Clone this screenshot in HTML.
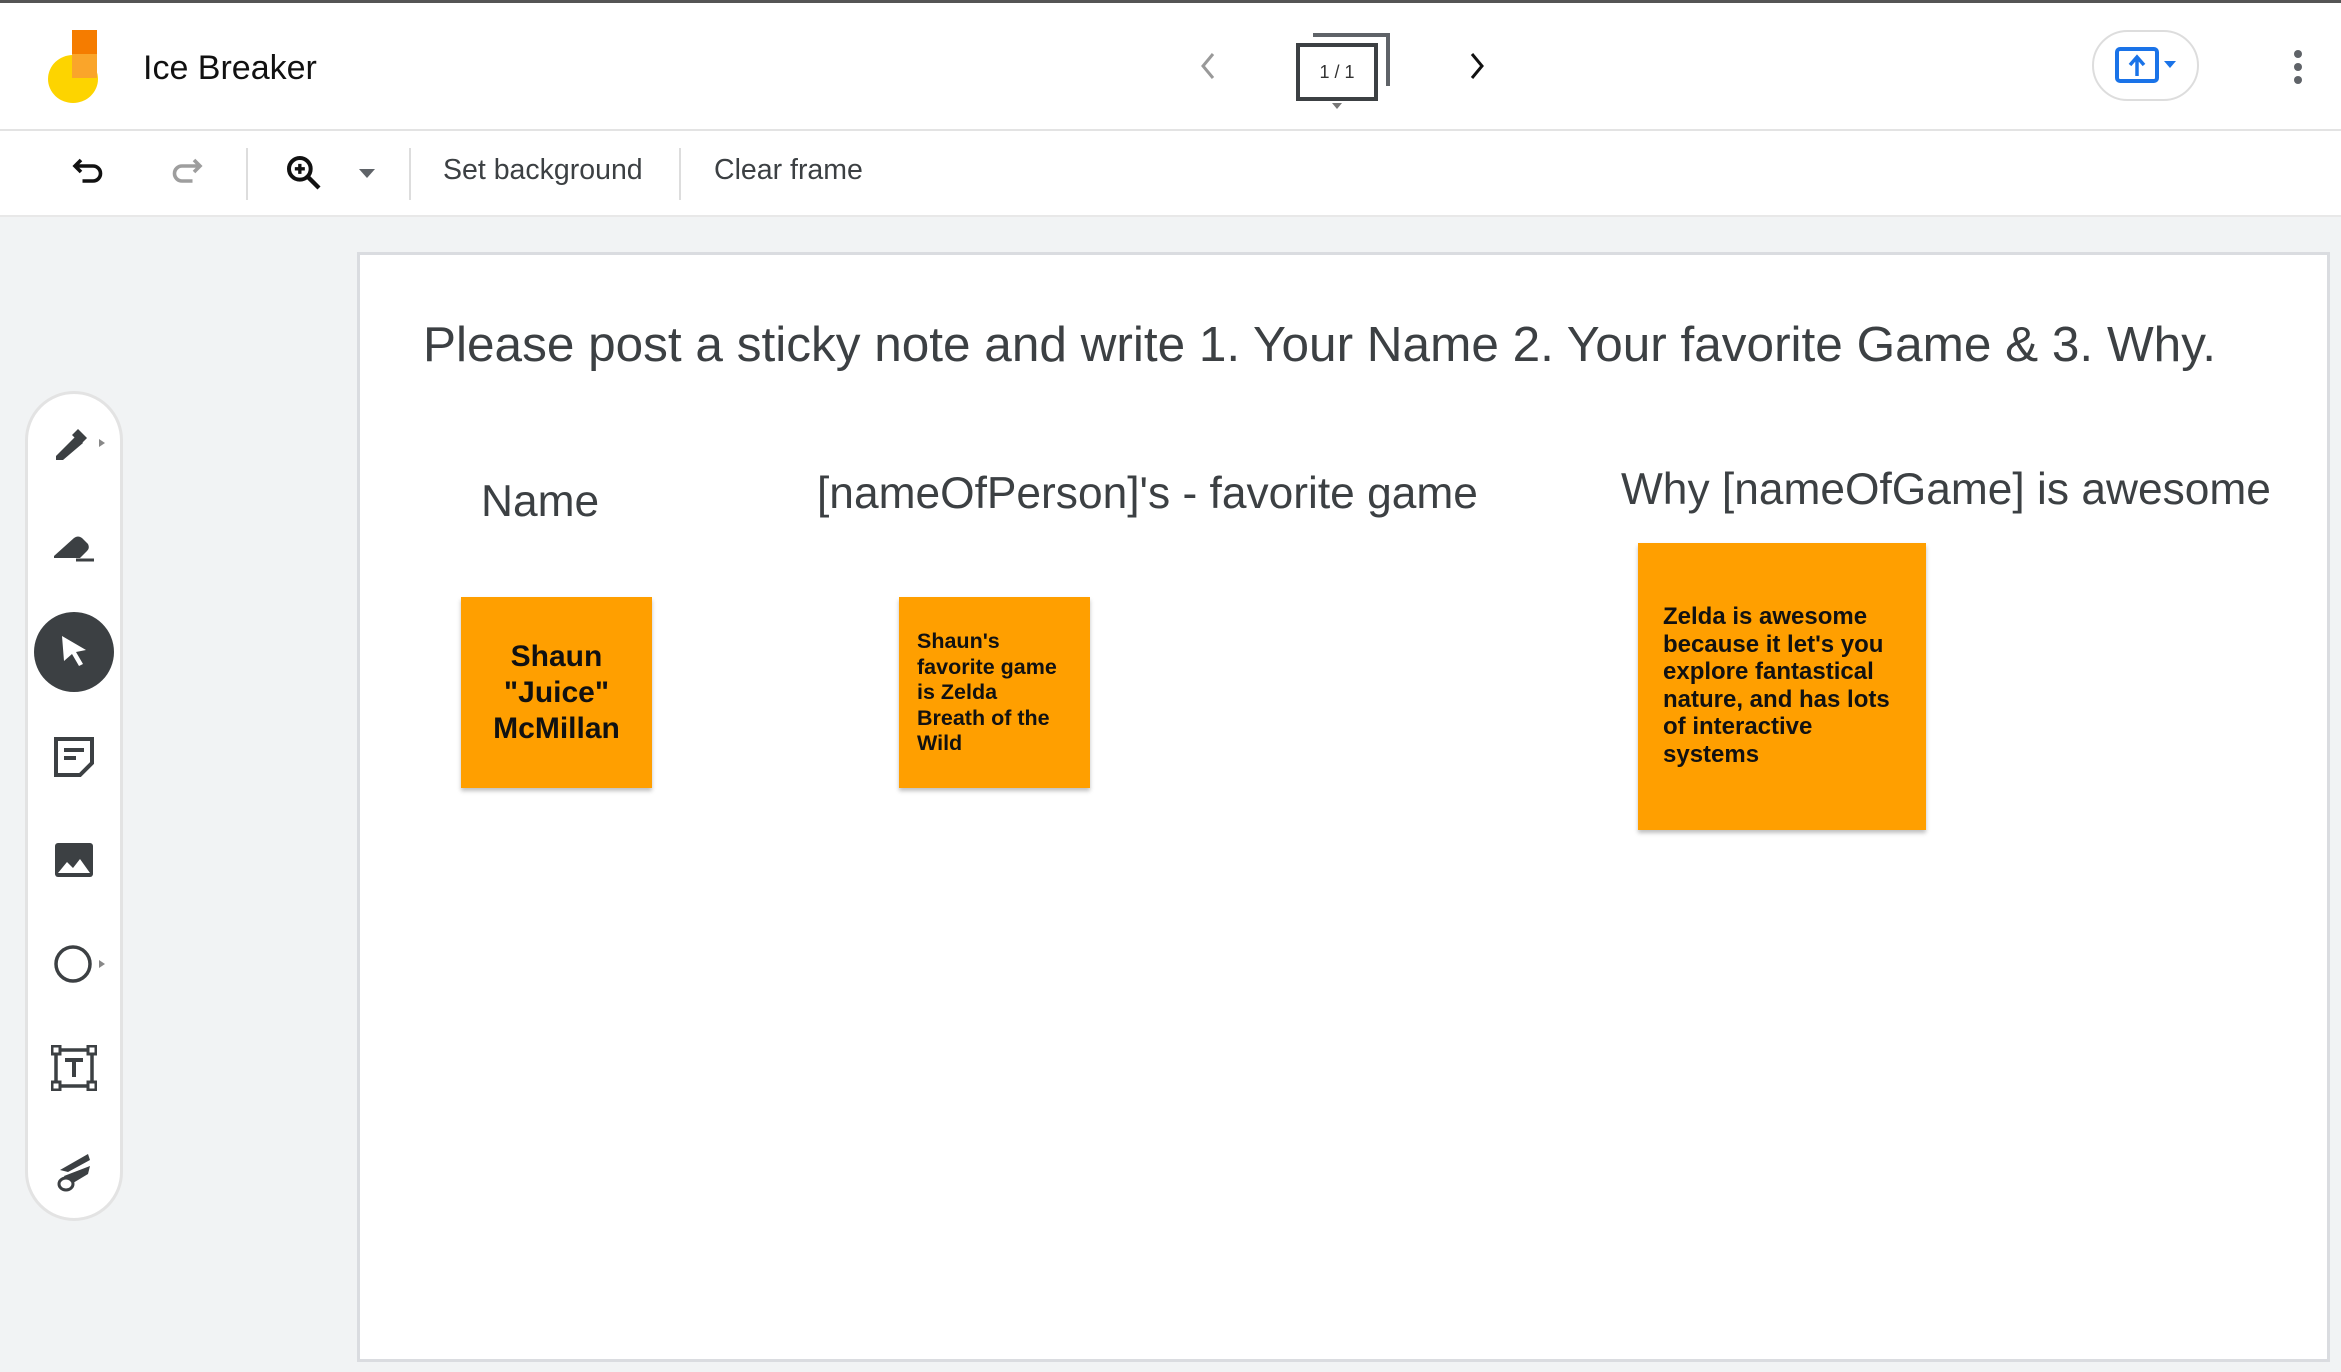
<!DOCTYPE html>
<html><head><meta charset="utf-8"><style>
*{margin:0;padding:0;box-sizing:border-box}
body{width:2341px;height:1372px;overflow:hidden;background:#f1f3f4;font-family:"Liberation Sans",Arial,sans-serif;position:relative;color:#202124}
.abs{position:absolute}
#hdr{left:0;top:0;width:2341px;height:131px;background:#fff;border-top:3px solid #555;border-bottom:2px solid #e3e3e3}
#tb{left:0;top:131px;width:2341px;height:86px;background:#fff;border-bottom:2px solid #e8e8e8}
.div{width:2px;height:52px;background:#ddd;top:148px}
.tbt{top:154px;font-size:28.5px;color:#3c4043}
#frame{left:357px;top:252px;width:1973px;height:1110px;background:#fff;border:3px solid #dadce0}
.h{font-size:44.3px;color:#3c4043;white-space:nowrap}
.st{background:#ff9f00;box-shadow:0 3px 4px rgba(0,0,0,.25);font-weight:bold;color:#111}
#side{left:25px;top:391px;width:98px;height:830px;background:#fff;border:3px solid #e3e3e3;border-radius:49px}
</style></head><body>
<div id="hdr" class="abs"></div>
<div class="abs" style="left:48px;top:55px;width:50px;height:48px;background:#fdd400;border-radius:50%"></div>
<div class="abs" style="left:72px;top:30px;width:25px;height:48px;background:#f57c00"></div>
<div class="abs" style="left:72px;top:54px;width:25px;height:24px;background:#faa52a"></div>
<div class="abs" style="left:143px;top:49px;font-size:34px;color:#111">Ice Breaker</div>
<svg class="abs" style="left:1195px;top:50px" width="28" height="32" viewBox="0 0 28 32"><path d="M18 4 L8 16 L18 28" fill="none" stroke="#999" stroke-width="3"/></svg>
<svg class="abs" style="left:1295px;top:30px" width="100" height="80" viewBox="0 0 100 80"><path d="M18 5 H93 V56" fill="none" stroke="#5f6368" stroke-width="4"/><rect x="3" y="15" width="78" height="54" fill="#fff" stroke="#3c4043" stroke-width="4"/><text x="42" y="48" font-size="18" text-anchor="middle" fill="#333" font-family="Liberation Sans">1 / 1</text><path d="M37 73 h10 l-5 6z" fill="#777"/></svg>
<svg class="abs" style="left:1463px;top:50px" width="28" height="32" viewBox="0 0 28 32"><path d="M9 4 L19 16 L9 28" fill="none" stroke="#111" stroke-width="3"/></svg>
<div class="abs" style="left:2092px;top:30px;width:107px;height:71px;border:2px solid #ddd;border-radius:36px;background:#fff"></div>
<svg class="abs" style="left:2114px;top:46px" width="64" height="40" viewBox="0 0 64 40"><rect x="3" y="3" width="40" height="32" rx="3" fill="none" stroke="#1a73e8" stroke-width="4"/><path d="M23 30 V12 M16 19 L23 11 L30 19" fill="none" stroke="#1a73e8" stroke-width="3.5"/><path d="M50 15 h12 l-6 7z" fill="#1a73e8"/></svg>
<svg class="abs" style="left:2290px;top:48px" width="16" height="40" viewBox="0 0 16 40"><circle cx="8" cy="6" r="4" fill="#5f6368"/><circle cx="8" cy="19" r="4" fill="#5f6368"/><circle cx="8" cy="32" r="4" fill="#5f6368"/></svg>
<div id="tb" class="abs"></div>
<svg class="abs" style="left:72px;top:154px" width="36" height="36" viewBox="0 0 24 24"><path d="M6 4 L2 8 L6 12 M2 8 H14 a5 5 0 0 1 0 10 H7" fill="none" stroke="#111" stroke-width="2.4"/></svg>
<svg class="abs" style="left:167px;top:154px" width="36" height="36" viewBox="0 0 24 24"><path d="M18 4 L22 8 L18 12 M22 8 H10 a5 5 0 0 0 0 10 H17" fill="none" stroke="#9e9e9e" stroke-width="2.4"/></svg>
<div class="abs div" style="left:246px"></div>
<svg class="abs" style="left:284px;top:153px" width="40" height="40" viewBox="0 0 24 24"><circle cx="9.5" cy="9.5" r="6.5" fill="none" stroke="#111" stroke-width="2.4"/><path d="M14.5 14.5 L21 21" stroke="#111" stroke-width="2.6"/><path d="M9.5 6.5v6M6.5 9.5h6" stroke="#111" stroke-width="2"/></svg>
<svg class="abs" style="left:358px;top:168px" width="18" height="12"><path d="M1 1h16l-8 9z" fill="#5f6368"/></svg>
<div class="abs div" style="left:409px"></div>
<div class="abs tbt" style="left:443px">Set background</div>
<div class="abs div" style="left:679px"></div>
<div class="abs tbt" style="left:714px">Clear frame</div>
<div id="frame" class="abs"></div>
<div class="abs" style="left:423px;top:316px;font-size:49.5px;color:#3c4043;white-space:nowrap">Please post a sticky note and write 1. Your Name 2. Your favorite Game &amp; 3. Why.</div>
<div class="abs h" style="left:481px;top:477px">Name</div>
<div class="abs h" style="left:817px;top:469px">[nameOfPerson]'s - favorite game</div>
<div class="abs h" style="left:1621px;top:465px">Why [nameOfGame] is awesome</div>
<div class="abs st" style="left:461px;top:597px;width:191px;height:191px;font-size:30px;line-height:36px;text-align:center;padding-top:42px">Shaun<br>"Juice"<br>McMillan</div>
<div class="abs st" style="left:899px;top:597px;width:191px;height:191px;font-size:21.5px;line-height:25.5px;padding:32px 0 0 18px">Shaun's<br>favorite game<br>is Zelda<br>Breath of the<br>Wild</div>
<div class="abs st" style="left:1638px;top:543px;width:288px;height:287px;font-size:24px;line-height:27.5px;padding:60px 0 0 25px">Zelda is awesome<br>because it let's you<br>explore fantastical<br>nature, and has lots<br>of interactive<br>systems</div>
<div id="side" class="abs"></div>
<svg class="abs" style="left:52px;top:423px" width="60" height="40" viewBox="0 0 60 40"><path d="M4 33 L24 13 L31 20 L11 37 H4z M20 12 L26 6 L35 15 L29 21z" fill="#3c4043"/><path d="M47 16 l6 4 -6 4z" fill="#888"/></svg>
<svg class="abs" style="left:52px;top:530px" width="46" height="36" viewBox="0 0 46 36"><path d="M2 26 L22 8 Q26 5 30 8 L36 14 Q38 18 35 21 L28 28 H2z" fill="#3c4043"/><path d="M24 30 H42" stroke="#3c4043" stroke-width="3"/></svg>
<div class="abs" style="left:34px;top:612px;width:80px;height:80px;border-radius:50%;background:#3c4043"></div>
<svg class="abs" style="left:58px;top:634px" width="32" height="36" viewBox="0 0 32 36"><path d="M4 2 L28 16 L18 18 L25 30 L21 32 L14 20 L6 27z" fill="#fff"/></svg>
<svg class="abs" style="left:52px;top:735px" width="44" height="44" viewBox="0 0 44 44"><path d="M4 4 H40 V28 L28 40 H4z" fill="none" stroke="#3c4043" stroke-width="4"/><path d="M12 15 H32 M12 23 H24" stroke="#3c4043" stroke-width="4"/></svg>
<svg class="abs" style="left:54px;top:842px" width="40" height="36" viewBox="0 0 40 36"><rect x="1" y="1" width="38" height="34" rx="3" fill="#3c4043"/><path d="M4 31 L13 20 L19 26 L26 17 L36 31z" fill="#fff"/></svg>
<svg class="abs" style="left:52px;top:944px" width="60" height="40" viewBox="0 0 60 40"><circle cx="21" cy="20" r="17" fill="none" stroke="#3c4043" stroke-width="3.5"/><path d="M47 16 l6 4 -6 4z" fill="#888"/></svg>
<svg class="abs" style="left:51px;top:1045px" width="46" height="46" viewBox="0 0 46 46"><rect x="5" y="5" width="36" height="36" fill="none" stroke="#3c4043" stroke-width="3.5"/><rect x="1" y="1" width="8" height="8" fill="#fff" stroke="#3c4043" stroke-width="3"/><rect x="37" y="1" width="8" height="8" fill="#fff" stroke="#3c4043" stroke-width="3"/><rect x="1" y="37" width="8" height="8" fill="#fff" stroke="#3c4043" stroke-width="3"/><rect x="37" y="37" width="8" height="8" fill="#fff" stroke="#3c4043" stroke-width="3"/><path d="M14 15 H32 M23 15 V32" stroke="#3c4043" stroke-width="4"/></svg>
<svg class="abs" style="left:54px;top:1150px" width="40" height="44" viewBox="0 0 40 44"><path d="M6 20 L34 4 L36 10 L14 22z M10 26 L36 16 L34 24 L14 36z" fill="#3c4043"/><ellipse cx="12" cy="34" rx="7" ry="6" fill="#fff" stroke="#3c4043" stroke-width="3"/></svg>
</body></html>
